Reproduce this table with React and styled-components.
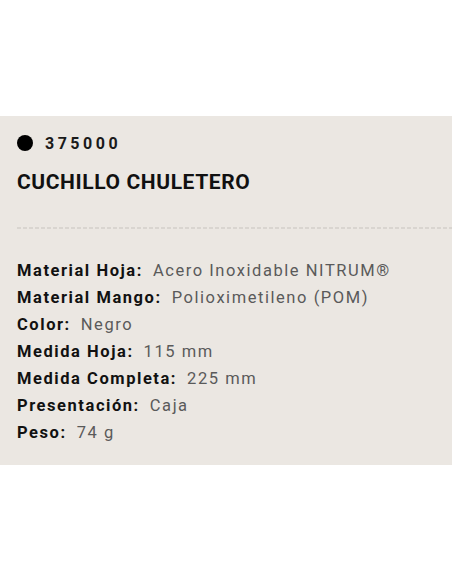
import styled, { createGlobalStyle } from "styled-components";

const Global = createGlobalStyle`
body{
  margin:0;
  background:#fff;
  font-family:Roboto, "Liberation Sans", sans-serif;
}
`;

const Page = styled.div`
padding-top:116px;
height:584px;
box-sizing:border-box;
`;

const Panel = styled.section`
background:#ebe7e2;
padding:17px 0 20px 17px;
height:349px;
box-sizing:border-box;
`;

const Ref = styled.div`
display:flex;
align-items:center;
gap:12px;
height:20px;
font-weight:700;
font-size:16px;
letter-spacing:3.5px;
color:#1a1a1a;
`;

const Dot = styled.span`
width:16px;
height:16px;
border-radius:50%;
background:#000;
flex-shrink:0;
`;

const Title = styled.h1`
margin:17px 0 0;
font-size:21px;
font-weight:700;
letter-spacing:0.6px;
color:#111;
line-height:24px;
`;

const Divider = styled.div`
margin-top:33px;
height:2px;
background:repeating-linear-gradient(90deg, #d9d5d0 0 4px, transparent 4px 6px);
`;

const Specs = styled.dl`
margin:28px 0 0;
display:flex;
flex-direction:column;
`;

const Row = styled.div`
display:flex;
gap:10px;
line-height:27px;
font-size:16.5px;
letter-spacing:1.55px;
`;

const Label = styled.dt`
font-weight:700;
color:#111;
`;

const Value = styled.dd`
margin:0;
color:#5a5a5a;
`;

const specs = [
  ["Material Hoja", "Acero Inoxidable NITRUM®"],
  ["Material Mango", "Polioximetileno (POM)"],
  ["Color", "Negro"],
  ["Medida Hoja", "115 mm"],
  ["Medida Completa", "225 mm"],
  ["Presentación", "Caja"],
  ["Peso", "74 g"],
];

export default function App() {
  return (
    <Page>
      <Global />
      <Panel>
        <Ref>
          <Dot />
          375000
        </Ref>
        <Title>CUCHILLO CHULETERO</Title>
        <Divider />
        <Specs>
          {specs.map(([label, value]) => (
            <Row key={label}>
              <Label>{label}:</Label>
              <Value>{value}</Value>
            </Row>
          ))}
        </Specs>
      </Panel>
    </Page>
  );
}
